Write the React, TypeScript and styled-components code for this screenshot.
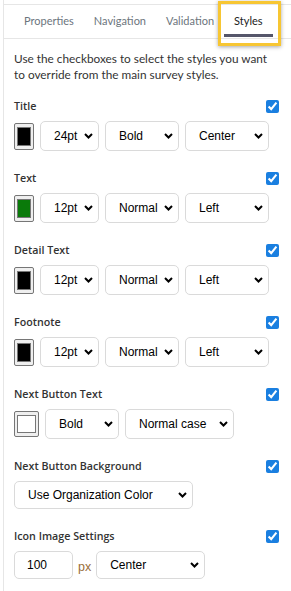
import React from "react";
import styled, { createGlobalStyle } from "styled-components";

const GlobalStyle = createGlobalStyle`
  html, body { margin: 0; padding: 0; background: #fff; }
  body { font-family: Lato, "Open Sans", sans-serif; color: #333; }
  * { box-sizing: border-box; }
`;

const Page = styled.div`
  position: relative;
  margin-left: 3px;
  border-left: 1px solid #e6e6e6;
  min-height: 591px;
  overflow: hidden;
`;

const Grip = styled.span`
  position: absolute;
  left: -3px;
  top: 307px;
  width: 2px;
  height: 8px;
  border-left: 1px solid #888;
  border-right: 1px solid #888;
`;

const TabBar = styled.div`
  display: flex;
  margin-top: 4px;
  height: 35px;
  border-top: 1px solid #e6e6e6;
  border-bottom: 1px solid #e6e6e6;
  padding-left: 10px;
`;

const Tab = styled.div<{ $active?: boolean }>`
  position: relative;
  display: flex;
  align-items: center;
  padding: 0 10px 2px;
  font-family: Lato, sans-serif;
  font-size: 11px;
  color: ${(p) => (p.$active ? "#222" : "#6c757d")};
  ${(p) =>
    p.$active &&
    `&::after {
      content: "";
      position: absolute;
      left: 0; right: 0; bottom: 1px;
      height: 3px;
      background: #55566a;
    }`}
`;

const Highlight = styled.span`
  position: absolute;
  left: -6px;
  right: -8px;
  top: -4px;
  bottom: -8px;
  border: 3px solid #f7c633;
  box-shadow: 0 1px 4px rgba(0, 0, 0, 0.35);
  pointer-events: none;
`;

const Content = styled.div`
  padding: 0 12px 0 10px;
`;

const Description = styled.p`
  margin: 12px 0 0;
  max-width: 262px;
  font-family: Lato, sans-serif;
  font-size: 11.8px;
  line-height: 16px;
  color: #333;
`;

const Section = styled.div<{ $first?: boolean }>`
  margin-top: ${(p) => (p.$first ? "15px" : "19px")};
`;

const LabelRow = styled.div`
  display: flex;
  justify-content: space-between;
  align-items: center;
  height: 16px;
`;

const Label = styled.span`
  font-family: "Open Sans", sans-serif;
  font-size: 10.7px;
  font-weight: 600;
  color: #333;
`;

const Check = styled.input`
  width: 13px;
  height: 13px;
  margin: 0;
  accent-color: #1a7fe0;
`;

const Controls = styled.div`
  display: flex;
  align-items: center;
  gap: 6px;
  margin-top: 7px;
`;

const Swatch = styled.div<{ $w: number; $h: number }>`
  width: ${(p) => p.$w}px;
  height: ${(p) => p.$h}px;
  border: 1px solid #767676;
  border-radius: 2px;
  background: #efefef;
  padding: 3px 2px;
  display: flex;
`;

const SwatchFill = styled.div<{ $color: string }>`
  flex: 1;
  background: ${(p) => p.$color};
  border: 1px solid #777;
`;

const Select = styled.div<{ $w: number; $h: number }>`
  width: ${(p) => p.$w}px;
  height: ${(p) => p.$h}px;
  border: 1px solid #dadada;
  border-radius: 5px;
  background: #fff;
  display: flex;
  align-items: center;
  justify-content: space-between;
  padding: 0 5px 0 13px;
  font-family: "Liberation Sans", Arial, sans-serif;
  font-size: 12px;
  color: #000;
`;

const TextInput = styled.div`
  width: 59px;
  height: 28px;
  border: 1px solid #dadada;
  border-radius: 5px;
  display: flex;
  align-items: center;
  padding-left: 12px;
  font-family: "Liberation Sans", Arial, sans-serif;
  font-size: 12px;
  color: #000;
`;

const Unit = styled.span`
  font-family: "Liberation Sans", Arial, sans-serif;
  font-size: 12.5px;
  color: #9a6e3a;
  margin: 4px -1px 0 -1px;
`;

const Chevron = () => (
  <svg width="9" height="6" viewBox="0 0 9 6" aria-hidden>
    <path d="M1 1l3.5 3.5L8 1" fill="none" stroke="#000" strokeWidth="2" />
  </svg>
);

const Dropdown: React.FC<{ w: number; h?: number; value: string }> = ({ w, h = 30, value }) => (
  <Select $w={w} $h={h}>
    <span>{value}</span>
    <Chevron />
  </Select>
);

const SectionHead: React.FC<{ label: string; first?: boolean; children: React.ReactNode }> = ({
  label,
  first,
  children,
}) => (
  <Section $first={first}>
    <LabelRow>
      <Label>{label}</Label>
      <Check type="checkbox" checked readOnly />
    </LabelRow>
    <Controls>{children}</Controls>
  </Section>
);

const fontRows = [
  { label: "Title", color: "#000", size: "24pt", weight: "Bold", align: "Center" },
  { label: "Text", color: "#0a7a0a", size: "12pt", weight: "Normal", align: "Left" },
  { label: "Detail Text", color: "#000", size: "12pt", weight: "Normal", align: "Left" },
  { label: "Footnote", color: "#000", size: "12pt", weight: "Normal", align: "Left" },
];

export default function App() {
  return (
    <>
      <GlobalStyle />
      <Page>
        <Grip />
        <TabBar>
          <Tab>Properties</Tab>
          <Tab>Navigation</Tab>
          <Tab>Validation</Tab>
          <Tab $active>
            Styles
            <Highlight />
          </Tab>
        </TabBar>
        <Content>
          <Description>
            Use the checkboxes to select the styles you want to override from the main survey styles.
          </Description>
          {fontRows.map((r, i) => (
            <SectionHead key={r.label} label={r.label} first={i === 0}>
              <Swatch $w={20} $h={27}>
                <SwatchFill $color={r.color} />
              </Swatch>
              <Dropdown w={59} value={r.size} />
              <Dropdown w={74} value={r.weight} />
              <Dropdown w={84} value={r.align} />
            </SectionHead>
          ))}
          <SectionHead label="Next Button Text">
            <Swatch $w={25} $h={26}>
              <SwatchFill $color="#fff" />
            </Swatch>
            <Dropdown w={74} value="Bold" />
            <Dropdown w={109} value="Normal case" />
          </SectionHead>
          <SectionHead label="Next Button Background">
            <Dropdown w={179} h={28} value="Use Organization Color" />
          </SectionHead>
          <SectionHead label="Icon Image Settings">
            <TextInput>100</TextInput>
            <Unit>px</Unit>
            <Dropdown w={109} h={28} value="Center" />
          </SectionHead>
        </Content>
      </Page>
    </>
  );
}
